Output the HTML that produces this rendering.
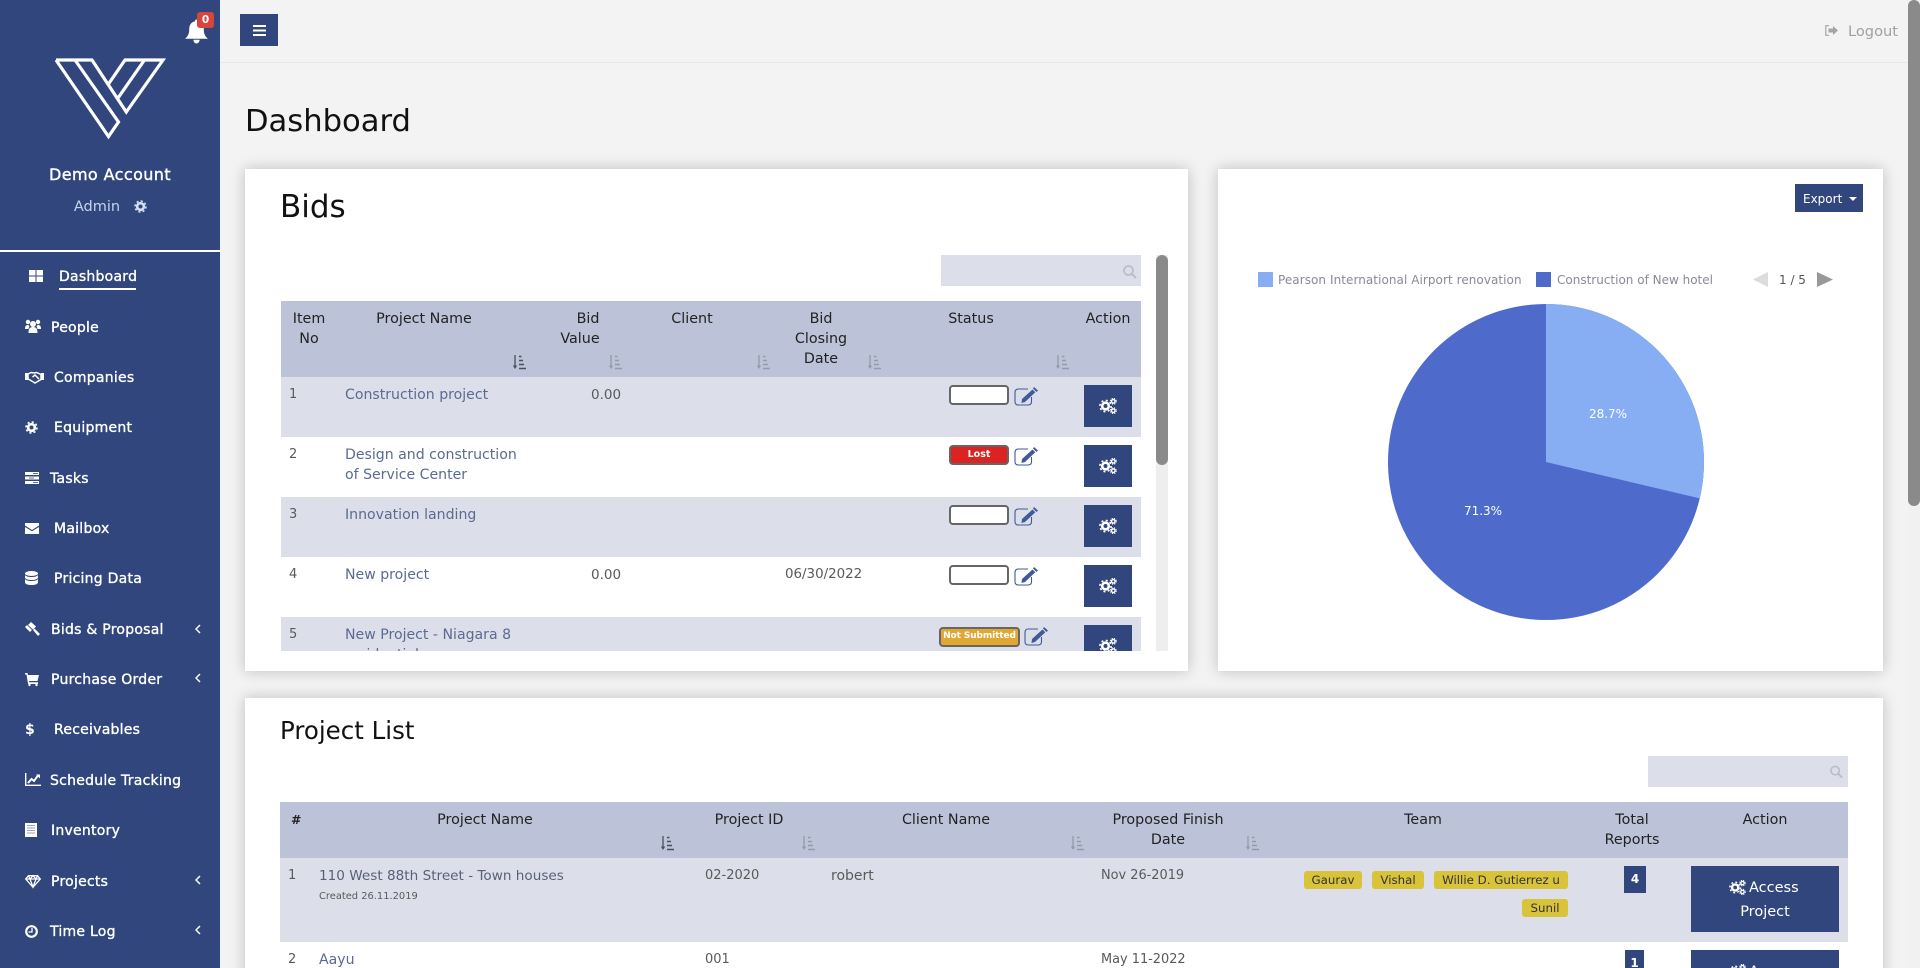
<!DOCTYPE html>
<html lang="en"><head><meta charset="utf-8"><title>Dashboard</title>
<style>
*{box-sizing:border-box}
html,body{margin:0;padding:0;width:1920px;height:968px;overflow:hidden;background:#f3f3f3;font-family:"DejaVu Sans","Liberation Sans",sans-serif;color:#555}
#wrap{position:relative;width:1920px;height:968px;overflow:hidden}
.a{position:absolute}
.t{position:absolute;white-space:nowrap;line-height:20px;font-size:14.100px;margin-top:1px}
.c{transform:translateX(-50%)}
.side{left:0;top:0;width:220px;height:968px;background:#30467d}
.n{color:#fff;font-size:14px;letter-spacing:.25px;-webkit-text-stroke:.35px #fff;font-weight:400;margin-top:1px}
.h{color:#222;font-size:14.300px}
.l{color:#5c6a92}
.g{color:#5a5a5a}
.d{font-size:13px}
.card{position:absolute;background:#fff;box-shadow:0 0 14px rgba(0,0,0,.22)}
.ic{position:absolute;overflow:visible}
.btn{position:absolute;background:#30467d}
.pill{position:absolute;width:60px;height:20px;background:#fff;border:2px solid #666;border-radius:4px;text-align:center;color:#fff;font-size:9.500px;font-weight:700;line-height:15px}
.bd{position:absolute;height:18px;background:#d9c33b;border-radius:3px;color:#333;font-size:11.800px;line-height:18px;text-align:center;white-space:nowrap}
</style></head><body><div id="wrap">
<svg width="0" height="0" style="position:absolute">
<symbol id="gears" viewBox="0 0 18 16"><circle cx="6.500" cy="8" r="3.300" fill="none" stroke="#fff" stroke-width="2.600"/><circle cx="6.500" cy="8" r="5.600" fill="none" stroke="#fff" stroke-width="1.600" stroke-dasharray="2 2.400"/><circle cx="14.300" cy="3.300" r="1.800" fill="none" stroke="#fff" stroke-width="1.400"/><circle cx="14.300" cy="3.300" r="3" fill="none" stroke="#fff" stroke-width="1" stroke-dasharray="1.200 1.200"/><circle cx="14.300" cy="12.700" r="1.800" fill="none" stroke="#fff" stroke-width="1.400"/><circle cx="14.300" cy="12.700" r="3" fill="none" stroke="#fff" stroke-width="1" stroke-dasharray="1.200 1.200"/></symbol>
<symbol id="sort" viewBox="0 0 14 15"><path d="M3 0v11" stroke="currentColor" stroke-width="1.300" fill="none"/><path d="M.8 10.500H5.200L3 14z" fill="currentColor"/><path d="M7 1.500h2.500M7 5.500h4M7 9.500h5M7 13.500h7" stroke="currentColor" stroke-width="1.500" fill="none"/></symbol>
<symbol id="edit" viewBox="0 0 25 19"><path d="M14 2H4.500Q1 2 1 5.500v9Q1 18 4.500 18h9.500q3.500 0 3.500-3.500V10" fill="none" stroke="#3f5a96" stroke-width="1.100"/><path d="M8 12 18.500 2.500l2.800 2.800L11 15l-3.500 1z" fill="#3f5a96"/><path d="M20 0l4 3.500-1.500 1.500-3.500-3.500z" fill="#3f5a96"/></symbol>
<symbol id="search" viewBox="0 0 14 14"><circle cx="5.500" cy="5.500" r="4.500" fill="none" stroke="#bbbec8" stroke-width="1.800"/><path d="M9 9l4 4" stroke="#bbbec8" stroke-width="2.200"/></symbol>
<symbol id="chev" viewBox="0 0 6 10"><path d="M5 1 1 5l4 4" fill="none" stroke="#fff" stroke-width="1.500"/></symbol>
<symbol id="gear" viewBox="0 0 14 14"><circle cx="7" cy="7" r="3.600" fill="none" stroke="currentColor" stroke-width="2.800"/><circle cx="7" cy="7" r="5.900" fill="none" stroke="currentColor" stroke-width="1.700" stroke-dasharray="2.300 2.330"/></symbol>
</svg>

<!-- sidebar -->
<div class="a side"></div>
<svg class="ic" style="left:183px;top:18px" width="27" height="27" viewBox="0 0 24 26"><path d="M12 1.500c1 0 1.500.7 1.500 1.700 4 .7 5.500 4 5.500 7.500 0 5 1.500 7 4 9.300H1c2.500-2.300 4-4.300 4-9.300 0-3.500 1.500-6.800 5.500-7.500C10.500 2.200 11 1.500 12 1.500zM9 21h6c0 2-1.300 3.500-3 3.500S9 23 9 21z" fill="#fff"/></svg>
<div class="a" style="left:197px;top:12px;width:17px;height:16px;background:#d8453d;border-radius:3px;color:#fff;font-size:10.500px;font-weight:700;line-height:16px;text-align:center">0</div>
<svg class="ic" style="left:51px;top:56px" width="116" height="86" viewBox="52 56 116 86"><g fill="none" stroke="#fff" stroke-width="3.200" stroke-linejoin="miter" stroke-linecap="butt"><path d="M57 60 109.500 136.500 119.500 122 76 60"/><path d="M57 60H93L127.300 112 164 60H126L109.500 84"/><path d="M145.500 60 119 98"/></g></svg>
<div class="t c" style="left:110px;top:164px;color:#fff;font-size:16px;-webkit-text-stroke:.4px #fff;letter-spacing:.4px">Demo Account</div>
<div class="t c" style="left:97px;top:196px;color:#c5d4ec;font-size:14.500px">Admin</div>
<svg class="ic" style="left:134px;top:200px;color:#d7e0f0" width="13" height="13"><use href="#gear"/></svg>
<div class="a" style="left:0;top:250px;width:220px;height:1.500px;background:#fff"></div>

<svg class="ic" style="left:29px;top:270px" width="14" height="12" viewBox="0 0 14 12"><path d="M0 0h6.500v5.500H0zM7.500 0H14v5.500H7.500zM0 6.500h6.500V12H0zM7.500 6.500H14V12H7.500z" fill="#fff"/></svg>
<div class="t n" style="left:59px;top:266px">Dashboard</div>
<div class="a" style="left:59px;top:288px;width:77px;height:2px;background:#fff"></div>

<svg class="ic" style="left:25px;top:319px" width="16" height="14" viewBox="0 0 16 14"><g fill="#fff"><circle cx="3" cy="3" r="2.200"/><circle cx="13" cy="3" r="2.200"/><circle cx="8" cy="5" r="3"/><path d="M0 10c0-3 1-4 3-4l1.500 1-1 3zM16 10c0-3-1-4-3-4l-1.500 1 1 3zM3.500 14c0-4 1-6 4.500-6s4.500 2 4.500 6z"/></g></svg>
<div class="t n" style="left:51px;top:317px">People</div>

<svg class="ic" style="left:25px;top:371px" width="19" height="13" viewBox="0 0 19 13"><path d="M0 2h3v7H0zM16 2h3v7h-3z" fill="#fff"/><path d="M3 3l3-1.500 3 .5 2.500-.5L16 3.500v5L10 12 5 9 3 8zM7.500 6 10 4l4 4" fill="none" stroke="#fff" stroke-width="1.500"/></svg>
<div class="t n" style="left:54px;top:367px">Companies</div>

<svg class="ic" style="left:25px;top:421px;color:#fff" width="13" height="13"><use href="#gear"/></svg>
<div class="t n" style="left:54px;top:417px">Equipment</div>

<svg class="ic" style="left:25px;top:472px" width="14" height="12" viewBox="0 0 14 12"><path d="M0 0h14v3H0zM0 4.500h14v3H0zM0 9h14v3H0z" fill="#fff"/><path d="M8 1.500h5M4 6h5M8 10.500h5" stroke="#30467d" stroke-width=".8"/></svg>
<div class="t n" style="left:50px;top:468px">Tasks</div>

<svg class="ic" style="left:25px;top:523px" width="14" height="11" viewBox="0 0 14 11"><path d="M0 0h14v2.500L7 7 0 2.500zM0 4l7 4.300L14 4v7H0z" fill="#fff"/></svg>
<div class="t n" style="left:54px;top:518px">Mailbox</div>

<svg class="ic" style="left:25px;top:571px" width="13" height="14" viewBox="0 0 13 14"><g fill="#fff"><ellipse cx="6.500" cy="2.500" rx="6.500" ry="2.500"/><path d="M0 4c1 1.500 3.500 2 6.500 2S12 5.500 13 4v2.500C13 8 10 9 6.500 9S0 8 0 6.500z"/><path d="M0 8c1 1.500 3.500 2 6.500 2S12 9.500 13 8v3.500C13 13 10 14 6.500 14S0 13 0 11.500z"/></g></svg>
<div class="t n" style="left:54px;top:568px">Pricing Data</div>

<svg class="ic" style="left:25px;top:622px" width="15" height="14" viewBox="0 0 15 14"><path d="M6 0l5 4.500-3 3L3 3zM0 5l2-2 5 5-2 2zM8 8l1.500-1.500L15 12l-2 2z" fill="#fff"/></svg>
<div class="t n" style="left:51px;top:619px">Bids &amp; Proposal</div>
<svg class="ic" style="left:195px;top:624px" width="6" height="10"><use href="#chev"/></svg>

<svg class="ic" style="left:25px;top:673px" width="14" height="13" viewBox="0 0 14 13"><path d="M0 0h2.500l.5 2h11l-1.500 6H4l.3 1.300H13V11H3L1.500 1.500H0z" fill="#fff"/><circle cx="4.500" cy="12" r="1.200" fill="#fff"/><circle cx="11.500" cy="12" r="1.200" fill="#fff"/></svg>
<div class="t n" style="left:51px;top:669px">Purchase Order</div>
<svg class="ic" style="left:195px;top:673px" width="6" height="10"><use href="#chev"/></svg>

<div class="t" style="left:25px;top:719px;color:#fff;font-size:14px;font-weight:700">$</div>
<div class="t n" style="left:54px;top:719px">Receivables</div>

<svg class="ic" style="left:25px;top:773px" width="16" height="13" viewBox="0 0 16 13"><path d="M.7 0v12.300H16" fill="none" stroke="#fff" stroke-width="1.400"/><path d="M3 10l3.500-4 2.500 2 4-5.500" fill="none" stroke="#fff" stroke-width="2"/><path d="M11 1.500h4v4z" fill="#fff"/></svg>
<div class="t n" style="left:50px;top:770px">Schedule Tracking</div>

<svg class="ic" style="left:25px;top:823px" width="12" height="14" viewBox="0 0 12 14"><path d="M0 0h12v14H0z" fill="#fff"/><path d="M2.500 2.500h7M2.500 5h7M2.500 7.500h7M2.500 10h7" stroke="#30467d" stroke-width="1" stroke-dasharray="1 1"/></svg>
<div class="t n" style="left:51px;top:820px">Inventory</div>

<svg class="ic" style="left:25px;top:875px" width="16" height="13" viewBox="0 0 16 13"><path d="M3.500.7h9L15.300 4 8 12.300.7 4zM.7 4h14.600M5 4l3 8 3-8M3.500.7 5 4l3-3.300L11 4 12.500.7" fill="none" stroke="#fff" stroke-width="1.300"/></svg>
<div class="t n" style="left:51px;top:871px">Projects</div>
<svg class="ic" style="left:195px;top:875px" width="6" height="10"><use href="#chev"/></svg>

<svg class="ic" style="left:25px;top:925px" width="13" height="13" viewBox="0 0 13 13"><circle cx="6.500" cy="6.500" r="5.300" fill="none" stroke="#fff" stroke-width="2.200"/><path d="M7 3v4H3.500" fill="none" stroke="#fff" stroke-width="1.300"/></svg>
<div class="t n" style="left:50px;top:921px">Time Log</div>
<svg class="ic" style="left:195px;top:925px" width="6" height="10"><use href="#chev"/></svg>

<!-- top bar -->
<div class="a" style="left:220px;top:62px;width:1688px;height:1px;background:#e8e8e8"></div>
<div class="btn" style="left:240px;top:14px;width:38px;height:32px"></div>
<svg class="ic" style="left:253px;top:25px" width="13" height="11" viewBox="0 0 13 11"><path d="M0 1h13M0 5.500h13M0 10h13" stroke="#fff" stroke-width="2"/></svg>
<svg class="ic" style="left:1825px;top:25px" width="13" height="11" viewBox="0 0 13 11"><path d="M4 .7H.8v9.600H4" fill="none" stroke="#a5a5a5" stroke-width="1.200"/><path d="M3.500 3.500H8V1l5 4.500L8 10V7.500H3.500z" fill="#a5a5a5"/></svg>
<div class="t" style="left:1848px;top:21px;color:#a0a0a0;font-size:14.600px">Logout</div>
<div class="t" style="left:245px;top:101px;color:#111;font-size:30.600px;line-height:40px">Dashboard</div>

<!-- scrollbar -->
<div class="a" style="left:1908px;top:0;width:12px;height:968px;background:#f1f1f1"></div>
<div class="a" style="left:1908px;top:0;width:12px;height:506px;background:#8a8a8a;border-radius:6px"></div>

<!-- bids card -->
<div class="card" style="left:245px;top:169px;width:943px;height:502px"></div>
<div class="t" style="left:280px;top:186px;color:#111;font-size:31px;line-height:40px">Bids</div>
<div class="a" style="left:941px;top:255px;width:200px;height:31px;background:#dcdfea"></div>
<svg class="ic" style="left:1123px;top:265px" width="14" height="14"><use href="#search"/></svg>
<div class="a" style="left:1156px;top:255px;width:12px;height:396px;background:#eee"></div>
<div class="a" style="left:1156px;top:255px;width:12px;height:210px;background:#8a8a8a;border-radius:6px"></div>

<div class="a" style="left:281px;top:301px;width:860px;height:350px;overflow:hidden">
<div class="a" style="left:-281px;top:-301px;width:1920px;height:968px">
<div class="a" style="left:281px;top:301px;width:860px;height:76px;background:#bcc3d9"></div>
<div class="a" style="left:281px;top:377px;width:860px;height:60px;background:#dcdfea"></div>
<div class="a" style="left:281px;top:497px;width:860px;height:60px;background:#dcdfea"></div>
<div class="a" style="left:281px;top:617px;width:860px;height:60px;background:#dcdfea"></div>

<div class="t h c" style="left:309px;top:308px">Item</div><div class="t h c" style="left:309px;top:328px">No</div>
<div class="t h c" style="left:424px;top:308px">Project Name</div>
<div class="t h c" style="left:588px;top:308px">Bid</div><div class="t h c" style="left:580px;top:328px">Value</div>
<div class="t h c" style="left:692px;top:308px">Client</div>
<div class="t h c" style="left:821px;top:308px">Bid</div><div class="t h c" style="left:821px;top:328px">Closing</div><div class="t h c" style="left:821px;top:348px">Date</div>
<div class="t h c" style="left:971px;top:308px">Status</div>
<div class="t h c" style="left:1108px;top:308px">Action</div>
<svg class="ic" style="left:512px;top:355px;color:#4a4f5f" width="14" height="15"><use href="#sort"/></svg>
<svg class="ic" style="left:608px;top:355px;color:#959aab" width="14" height="15"><use href="#sort"/></svg>
<svg class="ic" style="left:756px;top:355px;color:#959aab" width="14" height="15"><use href="#sort"/></svg>
<svg class="ic" style="left:867px;top:355px;color:#959aab" width="14" height="15"><use href="#sort"/></svg>
<svg class="ic" style="left:1055px;top:355px;color:#959aab" width="14" height="15"><use href="#sort"/></svg>

<div class="t g d" style="left:289px;top:384px">1</div><div class="t l" style="left:345px;top:384px">Construction project</div><div class="t g d" style="left:591px;top:384px;font-size:13.500px">0.00</div>
<div class="t g d" style="left:289px;top:444px">2</div><div class="t l" style="left:345px;top:444px">Design and construction</div><div class="t l" style="left:345px;top:464px">of Service Center</div>
<div class="t g d" style="left:289px;top:504px">3</div><div class="t l" style="left:345px;top:504px">Innovation landing</div>
<div class="t g d" style="left:289px;top:564px">4</div><div class="t l" style="left:345px;top:564px">New project</div><div class="t g d" style="left:591px;top:564px;font-size:13.500px">0.00</div><div class="t g" style="left:785px;top:564px;font-size:13.400px">06/30/2022</div>
<div class="t g d" style="left:289px;top:624px">5</div><div class="t l" style="left:345px;top:624px">New Project - Niagara 8</div><div class="t l" style="left:345px;top:644px">residential</div>

<div class="pill" style="left:949px;top:385px"></div>
<div class="pill" style="left:949px;top:445px;background:#dd2222">Lost</div>
<div class="pill" style="left:949px;top:505px"></div>
<div class="pill" style="left:949px;top:565px"></div>
<div class="pill" style="left:939px;top:627px;width:81px;background:#e0a832;font-size:9px;letter-spacing:-.1px;white-space:nowrap;overflow:hidden">Not Submitted</div>
<svg class="ic" style="left:1014px;top:387px" width="25" height="19"><use href="#edit"/></svg>
<svg class="ic" style="left:1014px;top:447px" width="25" height="19"><use href="#edit"/></svg>
<svg class="ic" style="left:1014px;top:507px" width="25" height="19"><use href="#edit"/></svg>
<svg class="ic" style="left:1014px;top:567px" width="25" height="19"><use href="#edit"/></svg>
<svg class="ic" style="left:1024px;top:627px" width="25" height="19"><use href="#edit"/></svg>
<div class="btn" style="left:1084px;top:385px;width:48px;height:42px"></div><svg class="ic" style="left:1099px;top:398px" width="18" height="16"><use href="#gears"/></svg>
<div class="btn" style="left:1084px;top:445px;width:48px;height:42px"></div><svg class="ic" style="left:1099px;top:458px" width="18" height="16"><use href="#gears"/></svg>
<div class="btn" style="left:1084px;top:505px;width:48px;height:42px"></div><svg class="ic" style="left:1099px;top:518px" width="18" height="16"><use href="#gears"/></svg>
<div class="btn" style="left:1084px;top:565px;width:48px;height:42px"></div><svg class="ic" style="left:1099px;top:578px" width="18" height="16"><use href="#gears"/></svg>
<div class="btn" style="left:1084px;top:625px;width:48px;height:42px"></div><svg class="ic" style="left:1099px;top:638px" width="18" height="16"><use href="#gears"/></svg>
</div></div>

<!-- chart card -->
<div class="card" style="left:1218px;top:169px;width:665px;height:502px"></div>
<div class="btn" style="left:1795px;top:184px;width:68px;height:28px"></div>
<div class="t" style="left:1803px;top:189px;color:#fff;font-size:12px;line-height:18px">Export</div>
<div class="a" style="left:1849px;top:197px;border:4px solid transparent;border-top-color:#fff;border-bottom:0"></div>
<div class="a" style="left:1258px;top:272px;width:15px;height:15px;background:#87aef2"></div>
<div class="t" style="left:1278px;top:269px;color:#8a8a94;font-size:12px;letter-spacing:.06px">Pearson International Airport renovation</div>
<div class="a" style="left:1536px;top:272px;width:15px;height:15px;background:#4e6bcc"></div>
<div class="t" style="left:1557px;top:269px;color:#8a8a94;font-size:12px;letter-spacing:0">Construction of New hotel</div>
<svg class="ic" style="left:1753px;top:272px" width="80" height="15" viewBox="0 0 80 15"><path d="M15 0v15L0 7.500z" fill="#dcdcdc"/><path d="M64 0v15l16-7.500z" fill="#999"/></svg>
<div class="t" style="left:1779px;top:269px;color:#555;font-size:12px">1 / 5</div>
<svg class="ic" style="left:1388px;top:304px" width="316" height="316" viewBox="1387 304 316 316">
<circle cx="1545" cy="462" r="158" fill="#4e6bcc"/>
<path d="M1545 462V304A158 158 0 0 1 1698.750 498.400z" fill="#87aef2"/>
</svg>
<div class="t c" style="left:1608px;top:403px;color:#fff;font-size:12px">28.7%</div>
<div class="t c" style="left:1483px;top:500px;color:#fff;font-size:12px">71.3%</div>

<!-- project list card -->
<div class="card" style="left:245px;top:698px;width:1638px;height:290px"></div>
<div class="t" style="left:280px;top:713px;color:#111;font-size:24.500px;line-height:34px">Project List</div>
<div class="a" style="left:1648px;top:756px;width:200px;height:31px;background:#dcdfea"></div>
<svg class="ic" style="left:1830px;top:765px" width="13" height="14"><use href="#search"/></svg>
<div class="a" style="left:280px;top:802px;width:1568px;height:56px;background:#bcc3d9"></div>
<div class="a" style="left:280px;top:858px;width:1568px;height:84px;background:#dcdfea"></div>

<div class="t h" style="left:291px;top:809px;font-weight:700;font-size:12.500px">#</div>
<div class="t h c" style="left:485px;top:809px">Project Name</div>
<div class="t h c" style="left:749px;top:809px">Project ID</div>
<div class="t h c" style="left:946px;top:809px">Client Name</div>
<div class="t h c" style="left:1168px;top:809px">Proposed Finish</div><div class="t h c" style="left:1168px;top:829px">Date</div>
<div class="t h c" style="left:1423px;top:809px">Team</div>
<div class="t h c" style="left:1632px;top:809px">Total</div><div class="t h c" style="left:1632px;top:829px">Reports</div>
<div class="t h c" style="left:1765px;top:809px">Action</div>
<svg class="ic" style="left:660px;top:836px;color:#4a4f5f" width="14" height="15"><use href="#sort"/></svg>
<svg class="ic" style="left:801px;top:836px;color:#959aab" width="14" height="15"><use href="#sort"/></svg>
<svg class="ic" style="left:1070px;top:836px;color:#959aab" width="14" height="15"><use href="#sort"/></svg>
<svg class="ic" style="left:1245px;top:836px;color:#959aab" width="14" height="15"><use href="#sort"/></svg>

<div class="t g d" style="left:288px;top:865px">1</div>
<div class="t" style="left:319px;top:865px;font-size:13.600px;color:#5a5f7a">110 West 88th Street - Town houses</div>
<div class="t g" style="left:319px;top:886px;font-size:9.900px">Created 26.11.2019</div>
<div class="t g" style="left:705px;top:865px;font-size:13px">02-2020</div>
<div class="t g" style="left:831px;top:865px;font-size:14px">robert</div>
<div class="t g" style="left:1101px;top:865px;font-size:12.900px">Nov 26-2019</div>
<div class="bd" style="left:1304px;top:871px;width:58px">Gaurav</div>
<div class="bd" style="left:1372px;top:871px;width:52px">Vishal</div>
<div class="bd" style="left:1434px;top:871px;width:134px">Willie D. Gutierrez u</div>
<div class="bd" style="left:1522px;top:899px;width:46px">Sunil</div>
<div class="btn" style="left:1624px;top:866px;width:22px;height:27px;color:#fff;font-size:12px;font-weight:700;line-height:27px;text-align:center">4</div>
<div class="btn" style="left:1691px;top:866px;width:148px;height:66px"></div>
<svg class="ic" style="left:1729px;top:880px" width="17" height="15"><use href="#gears"/></svg>
<div class="t" style="left:1749px;top:877px;color:#fff;font-size:14.500px">Access</div>
<div class="t c" style="left:1765px;top:901px;color:#fff;font-size:14.500px">Project</div>

<div class="t g d" style="left:288px;top:949px">2</div>
<div class="t l" style="left:319px;top:949px">Aayu</div>
<div class="t g" style="left:705px;top:949px;font-size:13px">001</div>
<div class="t g" style="left:1101px;top:949px;font-size:12.900px">May 11-2022</div>
<div class="btn" style="left:1625px;top:950px;width:19px;height:27px;color:#fff;font-size:12px;font-weight:700;line-height:27px;text-align:center">1</div>
<div class="btn" style="left:1691px;top:950px;width:148px;height:66px"></div>
<svg class="ic" style="left:1729px;top:964px" width="17" height="15"><use href="#gears"/></svg>
<div class="t" style="left:1749px;top:961px;color:#fff;font-size:14.500px">Access</div>
</div></body></html>
